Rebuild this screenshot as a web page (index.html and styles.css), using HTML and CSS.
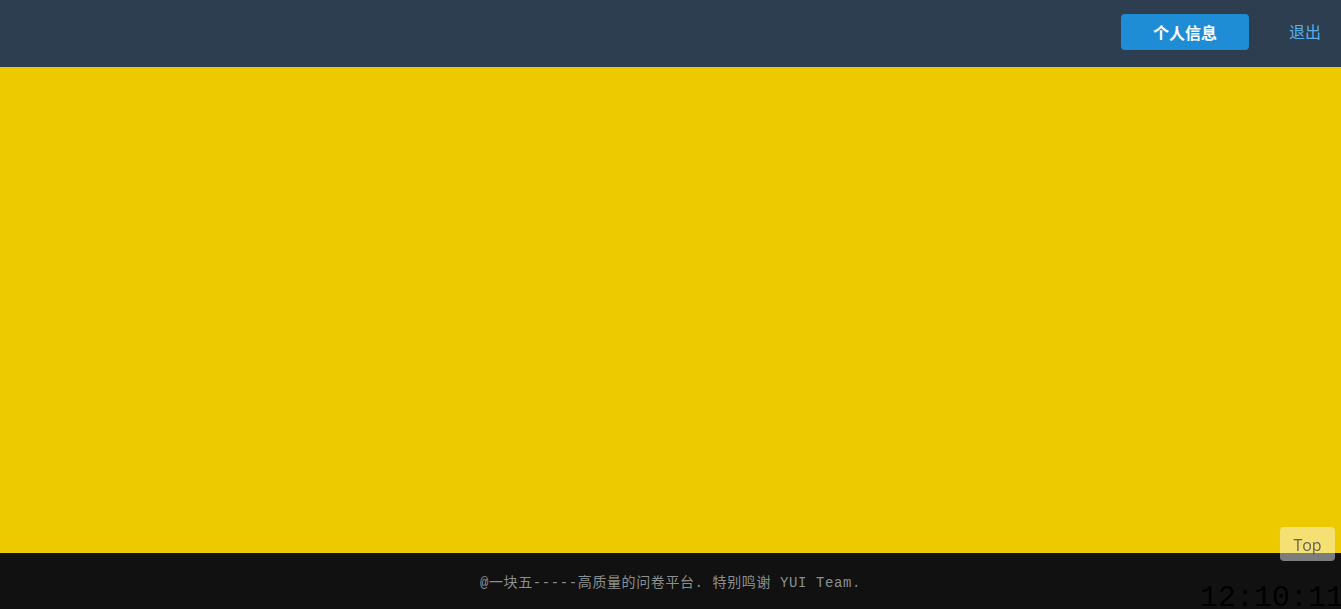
FILE: index.html
```html
<!DOCTYPE html>
<html lang="zh">
<head>
<meta charset="utf-8">
<title>问卷平台</title>
<link rel="stylesheet" href="styles.css">
</head>
<body>
<div class="page">
  <header class="header">
    <a class="btn-info">个人信息</a>
    <a class="logout">退出</a>
  </header>
  <main class="main"></main>
  <footer class="footer">
    <p class="copy">@一块五-----高质量的问卷平台. 特别鸣谢 YUI Team.</p>
  </footer>
</div>
<a class="top">Top</a>
<div class="clock">12:10:11</div>
</body>
</html>
```
FILE: styles.css
```css
html, body {
  margin: 0;
  padding: 0;
  height: 100%;
  overflow: hidden;
}
body {
  font-family: "Noto Sans CJK SC", "Open Sans", sans-serif;
}
.page {
  display: flex;
  flex-direction: column;
  height: 609px;
}
.header {
  height: 67px;
  background: #2c3e50;
  display: flex;
  align-items: center;
  justify-content: flex-end;
  padding-right: 20px;
  box-sizing: border-box;
}
.btn-info {
  width: 128px;
  height: 36px;
  margin-top: -3px;
  background: #1f8dd6;
  border-radius: 4px;
  color: #fff;
  font-size: 16px;
  font-weight: bold;
  display: flex;
  align-items: center;
  justify-content: center;
  cursor: pointer;
}
.logout {
  margin-left: 40px;
  color: #5aaee8;
  font-size: 16px;
  line-height: 20px;
  margin-top: -5px;
  cursor: pointer;
}
.main {
  flex: 1;
  background: #edc900;
}
.footer {
  height: 56px;
  background: #111111;
  display: flex;
  justify-content: center;
}
.copy {
  margin: 0;
  padding-top: 21px;
  color: #8a9090;
  font-family: "Liberation Mono", "Noto Sans CJK SC", monospace;
  font-size: 14px;
  letter-spacing: 0.6px;
  line-height: 18px;
}
.top {
  position: fixed;
  right: 6px;
  bottom: 48px;
  width: 55px;
  height: 34px;
  border-radius: 4px;
  background: rgba(255, 255, 255, 0.45);
  color: #5f5f5f;
  font-family: "Open Sans", sans-serif;
  font-size: 16px;
  display: flex;
  align-items: flex-end;
  justify-content: center;
  padding-bottom: 7px;
  box-sizing: border-box;
  line-height: 18px;
}
.clock {
  position: fixed;
  left: 1200px;
  top: 580px;
  color: #000;
  font-family: "Liberation Mono", monospace;
  font-size: 30px;
  line-height: 36px;
  white-space: nowrap;
}
```
